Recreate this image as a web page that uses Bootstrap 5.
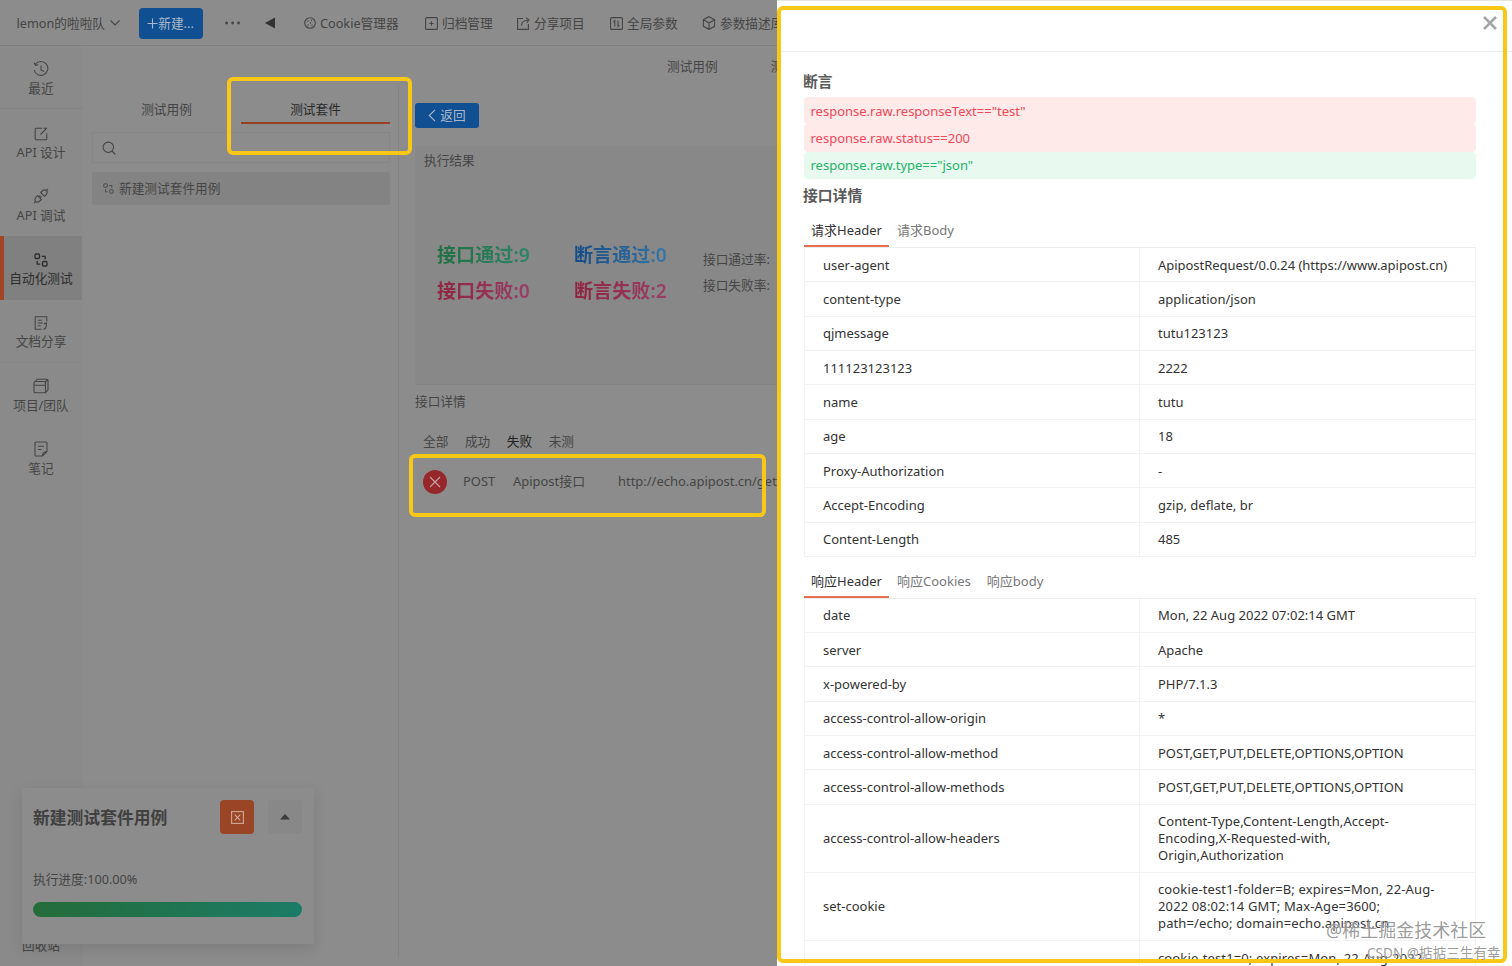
<!DOCTYPE html>
<html lang="zh-CN">
<head>
<meta charset="utf-8">
<title>Apipost</title>
<link href="https://cdn.jsdelivr.net/npm/bootstrap@5.3.0/dist/css/bootstrap.min.css" rel="stylesheet">
<style>
:root{--dim:#8c8c8c;--line:#828282;--ink:#454545;--orange:#a04526;--hl:#f9c715}
body{font-family:"Noto Sans","Noto Sans CJK SC",sans-serif;font-size:12.7px;line-height:17px;width:1512px;height:966px;overflow:hidden;background:var(--dim);color:var(--ink);white-space:nowrap}
svg{fill:none;stroke:currentColor;stroke-width:1.1;display:block;flex:none}
.topbar{height:46px;border-bottom:1px solid #7f7f7f;padding:1px 0 0 16.5px}
.team{width:122px}.btn-new{width:64px;height:31px;background:#0f4f92;color:#a9b9c9;border-radius:4px;margin-right:22px}
.more{width:40px}.fold{width:39px}
.tool{gap:4.5px}
.sidebar{width:83px;background:#8a8a8a}
.side-item{height:63.4px;gap:3px;padding-top:4px;width:82px}
.side-item.cut{border-bottom:1px solid var(--line)}
.side-item.now{background:#808080;color:#2c2c2c;border-left:4px solid var(--orange);padding-right:4px}
.cases{width:316px;padding:46px 8px 0 9px;background:linear-gradient(#838383,#838383) no-repeat right 40px/1px 872px}
.case-tabs{height:33px}
.case-tabs>div{width:149px;height:32px;line-height:34px;text-align:center}
.case-tabs>.now{color:#2a2a2a;border-bottom:2px solid #963f25}
.search{height:31px;border:1px solid #868686;margin-top:7px;padding-left:9px;width:298px}
.case{height:33px;background:#838383;margin-top:9px;padding-left:11px;gap:5px;border-radius:3px;width:298px}
.main{width:379px;padding-left:16px}
.main-tabs{height:57px;padding:12px 0 0 252px;gap:53px}
.btn-back{width:64px;height:25px;background:#0f4f92;color:#a9b9c9;border-radius:3px}
.result{height:239px;margin-top:18px;background:#888;border-bottom:1px solid #828282;padding:6px 0 0 9px}
.stats{padding:69px 0 0 13px}
.stat{font-size:19.1px;line-height:35.500px;font-weight:600;width:137px}
.stat>span{background-clip:text;-webkit-background-clip:text;color:transparent}
.g{background-image:linear-gradient(90deg,#1f7042,#2f8369)}
.b{background-image:linear-gradient(90deg,#144b88,#3676a4)}
.r{background-image:linear-gradient(90deg,#902340,#984066)}
.rates{line-height:25.500px;margin-left:-8px;padding-top:9px}
.filters{padding:23px 0 0 8px;gap:16.5px}
.api-row{padding:19px 0 0 8px;height:44px;font-size:12.95px}
.fail{width:24px;height:24px;background:#96282c;color:#c7a5a5}
.task{left:22px;top:788px;width:292px;height:156px;background:#8c8c8c;box-shadow:0 5px 14px rgba(0,0,0,.11);padding:12px 12px 0 11px}
.task-title{font-size:16.8px;font-weight:700;line-height:35px;color:#404040}
.sq{width:34px;height:34px;border-radius:4px}
.bar{height:15px;border-radius:8px;background:linear-gradient(90deg,#246c3a,#1b7c66)}
.mark-box{border:4px solid var(--hl);border-radius:6px}
.panel{left:777px;top:0;width:735px;height:966px;background:#fff;color:#333;overflow:hidden;border-top:1px solid #e4e6d8}
.panel-head{height:51px;border-bottom:1px solid #eee}
.panel-body{padding:19px 36px 0 27px;font-size:13px}
.sec{font-size:14.8px;line-height:20px;font-weight:700;color:#5a5a5a;margin-left:-1px}
.assert{height:27.4px;line-height:28px;padding-left:6.500px;border-radius:4px}
.bad{background:#ffeaea;color:#f04858}.good{background:#e8f9ef;color:#27b36a}
.tabs{height:35px;border-bottom:1px solid #ececec;color:#777}
.tabs>div{height:34px;line-height:34px;padding-left:8px}
.tabs>.now{width:85px;color:#333;border-bottom:2px solid #e5704d;padding-left:7px}
.kv{height:34.3px;border:1px solid #f2f2f2;border-top:0;width:672px}
.kv>div{padding:1px 0 0 18px;display:flex;align-items:center;width:334px;height:100%}
.kv>div+div{border-left:1px solid #f2f2f2}
.tall{height:68px}
.wm{color:rgba(90,90,90,.62);text-shadow:0 0 1px #fff}
</style>
</head>
<body>
<header class="topbar d-flex align-items-center">
  <div class="team d-flex align-items-center"><span>lemon的啦啦队</span><svg class="ms-1" width="12" height="8" viewBox="0 0 12 8"><path d="M1.500 1.500L6 6l4.500-4.500"/></svg></div>
  <div class="btn-new d-flex align-items-center justify-content-center"><svg width="11" height="11" viewBox="0 0 11 11"><path d="M5.500 .5v10M.5 5.500h10"/></svg><span>新建...</span></div>
  <svg class="more" height="4" viewBox="0 0 40 4"><g fill="currentColor" stroke="none"><circle cx="1.600" cy="2" r="1.400"/><circle cx="7.600" cy="2" r="1.400"/><circle cx="13.600" cy="2" r="1.400"/></g></svg>
  <svg class="fold" height="12" viewBox="0 0 39 12"><path d="M10 .5v11L0 6z" fill="#333" stroke="none"/></svg>
  <div class="tool d-flex align-items-center" style="width:121px"><svg width="12" height="12" viewBox="0 0 12 12"><circle cx="6" cy="6" r="5.300"/><path d="M3.500 4h1M7 3.500h1M6 6h1M3.500 8h1M7.500 8.500h1" stroke-width="1.300"/></svg><span>Cookie管理器</span></div>
  <div class="tool d-flex align-items-center" style="width:92px"><svg width="13" height="13" viewBox="0 0 13 13"><rect x=".6" y=".6" width="11.800" height="11.800" rx="1"/><path d="M6.500 4.300v4.400M4.300 6.500h4.400"/></svg><span>归档管理</span></div>
  <div class="tool d-flex align-items-center" style="width:93px"><svg width="13" height="13" viewBox="0 0 13 13"><path d="M6 1.500H.6v10.900h10.800V7M4.500 8.500c0-3 2-5 6.500-5.500M9 .6l3 2.200-2.200 2.800"/></svg><span>分享项目</span></div>
  <div class="tool d-flex align-items-center" style="width:92px"><svg width="13" height="13" viewBox="0 0 13 13"><rect x=".6" y=".6" width="11.800" height="11.800" rx="1"/><path d="M4.800 9.500V3.700L3.500 5M8 3.500v5.800L9.300 8"/></svg><span>全局参数</span></div>
  <div class="tool d-flex align-items-center"><svg width="14" height="14" viewBox="0 0 14 14"><path d="M7 .7l5.600 3v6.600L7 13.300l-5.600-3V3.700zM1.400 3.700L7 7l5.600-3.300M7 7v6.300"/></svg><span>参数描述库</span></div>
</header>

<div class="d-flex" style="height:920px">
  <nav class="sidebar d-flex flex-column">
    <div class="side-item cut d-flex flex-column align-items-center justify-content-center"><svg width="16" height="16" viewBox="0 0 16 16"><path d="M2.500 3.200A6.900 6.900 0 1 1 1.200 9M1.200 1.800l1.300 2.500 2.800-.6M8 4.500V9l3 1.500"/></svg>最近</div>
    <div class="side-item d-flex flex-column align-items-center justify-content-center" style="padding-top:6px"><svg width="14" height="14" viewBox="0 0 14 14"><path d="M8 1.300H2.200q-1 0-1 1v9.500q0 1 1 1h9.600q1 0 1-1V6.500M6.500 7.500l6.300-6.300M9.500 1.200h3.300"/></svg>API 设计</div>
    <div class="side-item d-flex flex-column align-items-center justify-content-center"><svg width="16" height="16" viewBox="0 0 16 16"><path d="M1 15l2-2M13 3l2-2M7.700 4.500l3.800 3.800 1.500-1.500c3-3-.8-6.800-3.800-3.800zM4.500 7.700l3.800 3.800L6.800 13c-3 3-6.800-.8-3.800-3.800zM5.800 9l1.600-1.600M7 10.200l1.600-1.600"/></svg>API 调试</div>
    <div class="side-item now d-flex flex-column align-items-center justify-content-center"><svg width="14" height="14" viewBox="0 0 14 14" style="stroke-width:1.300"><rect x="1" y="1" width="4.500" height="4.500" rx="1"/><rect x="8.500" y="8.500" width="4.500" height="4.500" rx="1"/><path d="M7.800 3.300h3.400v3M3.200 8v3.200h3"/></svg>自动化测试</div>
    <div class="side-item cut d-flex flex-column align-items-center justify-content-center" style="border-color:#868686"><svg width="14" height="14" viewBox="0 0 14 14"><path d="M7.500 13.300H1.200V.8h11.600v4.500M3.800 4.300h4M3.800 7h5M3.800 9.800h3M9.800 8l2.600-1.200v3.200M9.500 13.200c2.500-.5 3-2.500 2.900-5.500"/></svg>文档分享</div>
    <div class="side-item d-flex flex-column align-items-center justify-content-center" style="padding-top:2px"><svg width="16" height="16" viewBox="0 0 16 16"><path d="M1 5q0-1.500 1.200-1.500h9q1.300 0 1.300 1.500v9.700H2q-1 0-1-1zM1 7.300h11.500M2.500 3.300L4 1.200h10q1 0 1 1V12l-2.300 2.400M12.300 4L15 1.500"/></svg>项目/团队</div>
    <div class="side-item d-flex flex-column align-items-center justify-content-center" style="padding-top:2px"><svg width="14" height="16" viewBox="0 0 14 16"><path d="M2 1h10q1 0 1 1v8.500L8.500 15H2q-1 0-1-1V2q0-1 1-1zM8.500 15c0-3.500 1-4 4.500-4.500M4 5.300h6M4 8.500h3.500"/></svg>笔记</div>
  </nav>

  <section class="cases">
    <div class="case-tabs d-flex"><div>测试用例</div><div class="now">测试套件</div></div>
    <div class="search d-flex align-items-center"><svg width="14" height="14" viewBox="0 0 14 14"><circle cx="6.300" cy="6.300" r="5.200"/><path d="M10 10l3.300 3.500"/></svg></div>
    <div class="case d-flex align-items-center"><svg width="11" height="11" viewBox="0 0 14 14"><rect x="1" y="1" width="4.500" height="4.500" rx="1"/><rect x="8.500" y="8.500" width="4.500" height="4.500" rx="1"/><path d="M7.800 3.300h3.400v3M3.200 8v3.200h3"/></svg>新建测试套件用例</div>
  </section>

  <main class="main">
    <div class="main-tabs d-flex"><span>测试用例</span><span>测试套件</span></div>
    <div class="btn-back d-flex align-items-center justify-content-center gap-1"><svg width="8" height="13" viewBox="0 0 8 13"><path d="M7 .8L1.300 6.500 7 12.200"/></svg>返回</div>
    <div class="result">
      <div>执行结果</div>
      <div class="stats d-flex">
        <div class="stat"><span class="g">接口通过:9</span><br><span class="r">接口失败:0</span></div>
        <div class="stat"><span class="b">断言通过:0</span><br><span class="r">断言失败:2</span></div>
        <div class="rates">接口通过率:<br>接口失败率:</div>
      </div>
    </div>
    <div style="padding-top:8px">接口详情</div>
    <div class="filters d-flex"><span>全部</span><span>成功</span><span style="color:#222">失败</span><span>未测</span></div>
    <div class="api-row d-flex align-items-center"><span class="fail rounded-circle d-flex align-items-center justify-content-center"><svg width="12" height="12" viewBox="0 0 12 12"><path d="M1 1l10 10M11 1L1 11"/></svg></span><span style="margin-left:16px;width:50px">POST</span><span style="width:105px">Apipost接口</span><span>http://echo.apipost.cn/get</span></div>
  </main>
</div>

<div class="position-absolute" style="left:22px;top:937px">回收站</div>
<div class="task position-absolute">
  <div class="d-flex"><span class="task-title flex-grow-1">新建测试套件用例</span>
    <span class="sq d-flex align-items-center justify-content-center" style="background:#9a4526;color:#d0a795"><svg width="13" height="13" viewBox="0 0 13 13"><rect x=".6" y=".6" width="11.800" height="11.800"/><path d="M3.700 3.700l5.600 5.600M9.300 3.700L3.700 9.300"/></svg></span>
    <span class="sq d-flex align-items-center justify-content-center" style="background:#888;margin-left:14px"><svg width="10" height="6" viewBox="0 0 10 6"><path d="M0 5.500L5 0l5 5.500z" fill="#3c3c3c" stroke="none"/></svg></span></div>
  <div style="margin-top:36px">执行进度:100.00%</div>
  <div class="bar" style="margin-top:14px"></div>
</div>

<aside class="panel position-absolute">
  <div class="panel-head d-flex justify-content-end"><svg style="margin:14px 14px 0 0;color:#a6a6a6;stroke-width:2.600" width="16" height="16" viewBox="0 0 16 16"><path d="M2 2l12 12M14 2L2 14"/></svg></div>
  <div class="panel-body">
    <div class="sec" style="height:26px">断言</div>
    <div class="assert bad">response.raw.responseText=="test"</div>
    <div class="assert bad">response.raw.status==200</div>
    <div class="assert good" style="line-height:27px">response.raw.type=="json"</div>
    <div class="sec" style="margin-top:6px;height:28px">接口详情</div>
    <div class="tabs d-flex"><div class="now">请求Header</div><div>请求Body</div></div>
    <div class="kv d-flex"><div>user-agent</div><div style="letter-spacing:-.03px">ApipostRequest/0.0.24 (https://www.apipost.cn)</div></div>
    <div class="kv d-flex"><div>content-type</div><div>application/json</div></div>
    <div class="kv d-flex"><div>qjmessage</div><div>tutu123123</div></div>
    <div class="kv d-flex"><div>111123123123</div><div>2222</div></div>
    <div class="kv d-flex"><div>name</div><div>tutu</div></div>
    <div class="kv d-flex"><div>age</div><div>18</div></div>
    <div class="kv d-flex"><div>Proxy-Authorization</div><div>-</div></div>
    <div class="kv d-flex"><div>Accept-Encoding</div><div>gzip, deflate, br</div></div>
    <div class="kv d-flex"><div>Content-Length</div><div>485</div></div>
    <div class="tabs d-flex" style="margin-top:7px"><div class="now">响应Header</div><div>响应Cookies</div><div style="padding-left:16px">响应body</div></div>
    <div class="kv d-flex"><div>date</div><div>Mon, 22 Aug 2022 07:02:14 GMT</div></div>
    <div class="kv d-flex"><div>server</div><div>Apache</div></div>
    <div class="kv d-flex"><div>x-powered-by</div><div>PHP/7.1.3</div></div>
    <div class="kv d-flex"><div>access-control-allow-origin</div><div>*</div></div>
    <div class="kv d-flex"><div>access-control-allow-method</div><div>POST,GET,PUT,DELETE,OPTIONS,OPTION</div></div>
    <div class="kv d-flex"><div>access-control-allow-methods</div><div>POST,GET,PUT,DELETE,OPTIONS,OPTION</div></div>
    <div class="kv tall d-flex"><div>access-control-allow-headers</div><div style="letter-spacing:.06px">Content-Type,Content-Length,Accept-<br>Encoding,X-Requested-with,<br>Origin,Authorization</div></div>
    <div class="kv tall d-flex"><div>set-cookie</div><div style="letter-spacing:.13px">cookie-test1-folder=B; expires=Mon, 22-Aug-<br>2022 08:02:14 GMT; Max-Age=3600;<br>path=/echo; domain=echo.apipost.cn</div></div>
    <div class="kv tall d-flex"><div></div><div style="align-items:flex-start;padding-top:9px;letter-spacing:.13px">cookie-test1=0; expires=Mon, 22-Aug-2022</div></div>
  </div>
</aside>

<div class="mark-box position-absolute" style="left:227px;top:77px;width:185px;height:78px"></div>
<div class="mark-box position-absolute" style="left:409px;top:454px;width:357px;height:63px"></div>
<div class="mark-box position-absolute" style="left:777px;top:6px;width:730px;height:957px"></div>
<div class="wm position-absolute" style="left:1326px;top:918px;font-size:18px;line-height:24px">@稀土掘金技术社区</div>
<div class="wm position-absolute" style="left:1367px;top:943px;font-size:13.600px;line-height:20px">CSDN @掂掂三生有幸</div>
<script src="https://cdn.jsdelivr.net/npm/bootstrap@5.3.0/dist/js/bootstrap.bundle.min.js"></script>
</body>
</html>
